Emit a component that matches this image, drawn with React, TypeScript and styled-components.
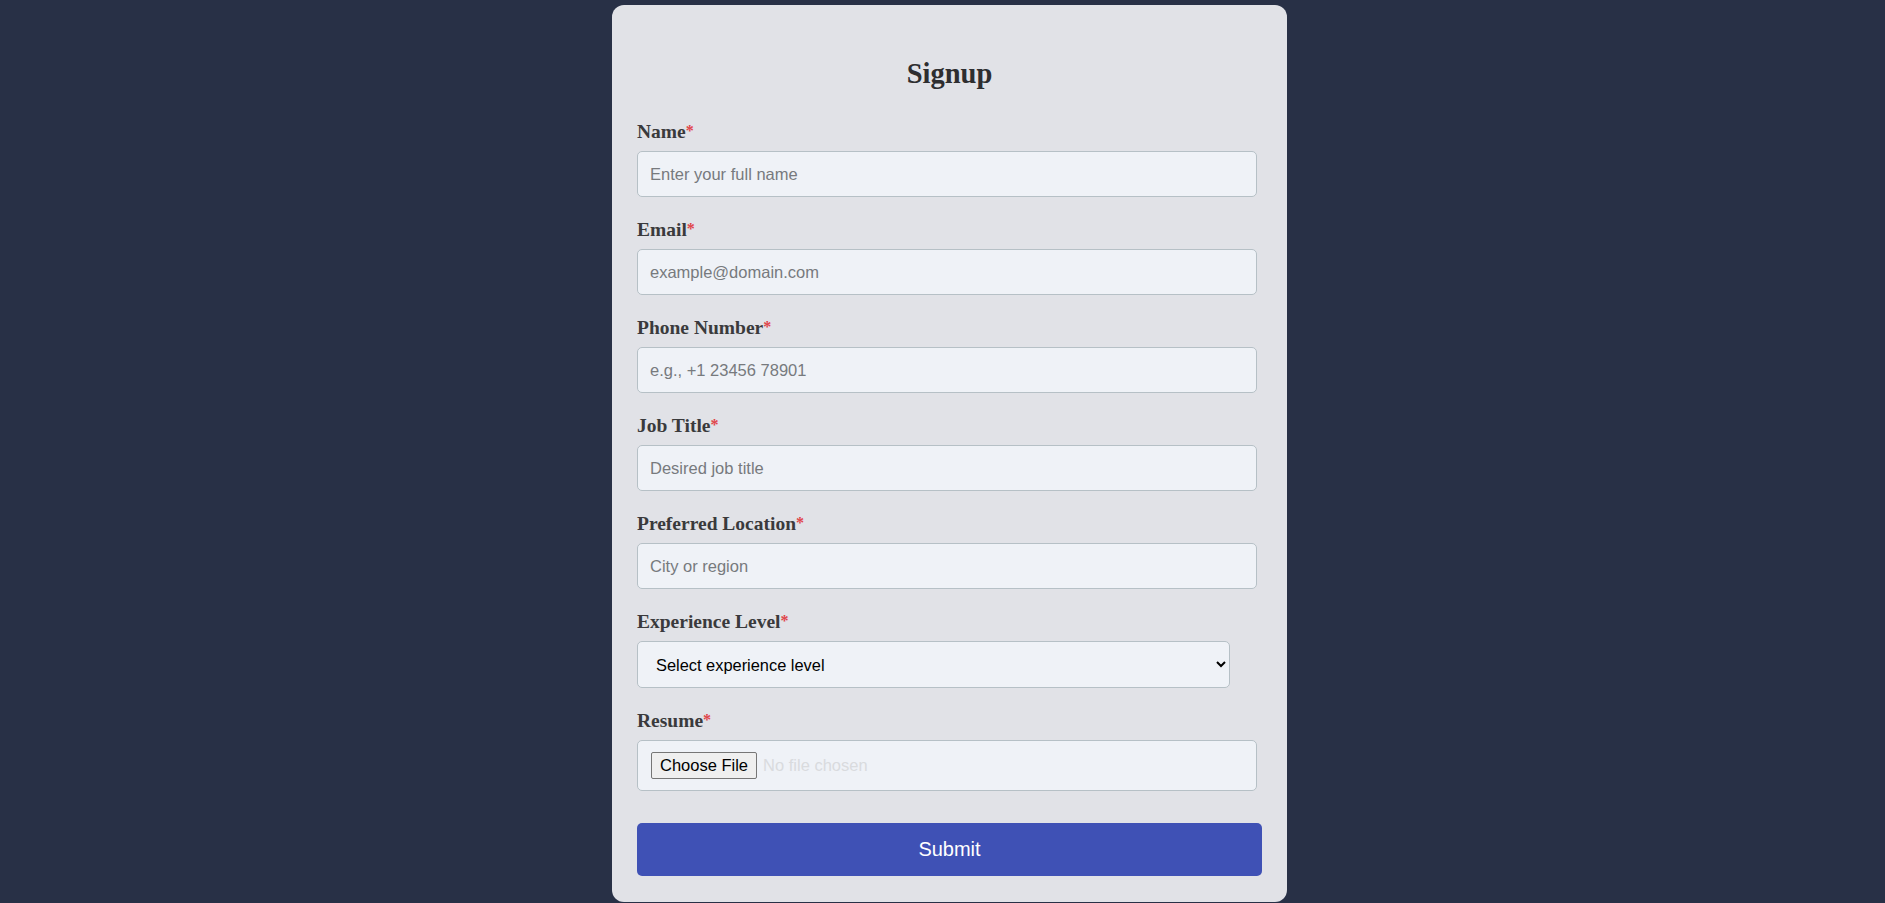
import React from "react";
import styled, { createGlobalStyle } from "styled-components";

const GlobalStyle = createGlobalStyle`
  html, body {
    margin: 0;
    padding: 0;
    background: #283046;
    font-family: "Liberation Sans", Arial, sans-serif;
  }
  * { box-sizing: border-box; }
`;

const Page = styled.div`
  display: flex;
  justify-content: center;
  padding: 5px 0 0 14px;
  min-height: 903px;
`;

const Card = styled.form`
  width: 675px;
  height: 897px;
  background: #e1e2e7;
  border-radius: 12px;
  padding: 52px 25px 25px;
  display: flex;
  flex-direction: column;
`;

const Title = styled.h2`
  margin: 0 0 30px;
  font-family: "Liberation Serif", "Times New Roman", serif;
  font-weight: 700;
  font-size: 28.5px;
  line-height: 34px;
  color: #2e2e30;
  text-align: center;
`;

const Group = styled.div<{ $gap?: number }>`
  display: flex;
  flex-direction: column;
  align-items: flex-start;
  margin-bottom: ${(p) => p.$gap ?? 22}px;
`;

const Label = styled.label`
  display: block;
  height: 22px;
  font-family: "Liberation Serif", "Times New Roman", serif;
  font-weight: 700;
  font-size: 19.5px;
  line-height: 22px;
  color: #3a3a3c;
  margin-bottom: 8px;
`;

const Req = styled.span`
  color: #e0454a;
  font-size: 16px;
  line-height: 0;
  vertical-align: 2px;
`;

const Input = styled.input`
  width: 620px;
  height: 46px;
  padding: 0 12px;
  border: 1px solid #b6c0c6;
  border-radius: 5px;
  background: #eff2f7;
  font-family: "Liberation Sans", Arial, sans-serif;
  font-size: 16.5px;
  color: #222;
  outline: none;
  &::placeholder {
    color: #777a7e;
  }
`;

const Select = styled.select`
  width: 593px;
  height: 47px;
  padding: 0 10px 0 14px;
  border: 1px solid #b6c0c6;
  border-radius: 5px;
  background-color: #eff2f7;
  font-family: "Liberation Sans", Arial, sans-serif;
  font-size: 16.4px;
  color: #000;
  outline: none;
`;

const FileInput = styled.input`
  width: 620px;
  height: 51px;
  padding: 11px 13px;
  border: 1px solid #b6c0c6;
  border-radius: 5px;
  background: #eff2f7;
  font-family: "Liberation Sans", Arial, sans-serif;
  font-size: 16.5px;
  line-height: 27px;
  color: #d9dbde;
  &::file-selector-button {
    height: 27px;
    padding: 0 8px;
    margin-right: 6px;
    font-family: "Liberation Sans", Arial, sans-serif;
    font-size: 16.5px;
    color: #000;
    background: #efefef;
    border: 1px solid #767676;
    border-radius: 2px;
  }
`;

const Submit = styled.button`
  width: 100%;
  height: 53px;
  margin-top: 32px;
  border: none;
  border-radius: 5px;
  background: #3f51b5;
  color: #ffffff;
  font-family: "Liberation Sans", Arial, sans-serif;
  font-size: 20px;
  cursor: pointer;
`;

type Field = { id: string; label: string; placeholder: string; type: string };

const fields: Field[] = [
  { id: "name", label: "Name", placeholder: "Enter your full name", type: "text" },
  { id: "email", label: "Email", placeholder: "example@domain.com", type: "email" },
  { id: "phone", label: "Phone Number", placeholder: "e.g., +1 23456 78901", type: "tel" },
  { id: "job", label: "Job Title", placeholder: "Desired job title", type: "text" },
  { id: "location", label: "Preferred Location", placeholder: "City or region", type: "text" },
];

export default function App() {
  return (
    <>
      <GlobalStyle />
      <Page>
        <Card onSubmit={(e) => e.preventDefault()}>
          <Title>Signup</Title>
          {fields.map((f) => (
            <Group key={f.id}>
              <Label htmlFor={f.id}>
                {f.label}
                <Req>*</Req>
              </Label>
              <Input id={f.id} type={f.type} placeholder={f.placeholder} />
            </Group>
          ))}
          <Group>
            <Label htmlFor="experience">
              Experience Level<Req>*</Req>
            </Label>
            <Select id="experience" defaultValue="">
              <option value="" disabled>
                Select experience level
              </option>
              <option value="entry">Entry level</option>
              <option value="mid">Mid level</option>
              <option value="senior">Senior level</option>
            </Select>
          </Group>
          <Group $gap={0}>
            <Label htmlFor="resume">
              Resume<Req>*</Req>
            </Label>
            <FileInput id="resume" type="file" />
          </Group>
          <Submit type="submit">Submit</Submit>
        </Card>
      </Page>
    </>
  );
}
